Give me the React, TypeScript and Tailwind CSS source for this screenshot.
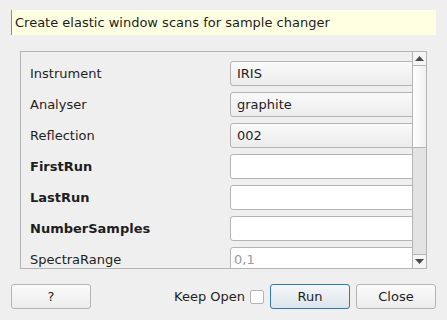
import React from "react";

const font = { fontFamily: '"DejaVu Sans", "Liberation Sans", sans-serif' };

function Combo({ value }: { value: string }) {
  return (
    <div className="h-[25px] w-[200px] shrink-0 rounded-[3px] border border-[#b4b4b4] bg-gradient-to-b from-[#fafafa] to-[#ececec] pl-[6px] flex items-center text-[13px] text-[#1e1e1e]">
      {value}
    </div>
  );
}

function Field({ placeholder }: { placeholder?: string }) {
  return (
    <div className="h-[25px] w-[200px] shrink-0 rounded-[3px] border border-[#b4b4b4] bg-white pl-[3px] flex items-center text-[13px] text-[#9a9a9a]">
      {placeholder ?? ""}
    </div>
  );
}

const rows: { label: string; bold?: boolean; kind: "combo" | "field"; value?: string }[] = [
  { label: "Instrument", kind: "combo", value: "IRIS" },
  { label: "Analyser", kind: "combo", value: "graphite" },
  { label: "Reflection", kind: "combo", value: "002" },
  { label: "FirstRun", bold: true, kind: "field" },
  { label: "LastRun", bold: true, kind: "field" },
  { label: "NumberSamples", bold: true, kind: "field" },
  { label: "SpectraRange", kind: "field", value: "0,1" },
];

export default function App() {
  return (
    <div className="w-[447px] h-[320px] bg-[#efefef] flex flex-col text-[13px] text-[#1e1e1e] overflow-hidden" style={font}>
      <div className="mt-[10px] mx-[11px] h-[25px] bg-[#ffffe1] border-l border-[#8c8c7a] pl-[3px] flex items-center">
        Create elastic window scans for sample changer
      </div>
      <div className="mt-[16px] mx-[20px] h-[218px] border border-[#b4b4b4] flex">
        <div className="flex-1 overflow-hidden pt-[9px] pl-[9px] flex flex-col gap-[6px]">
          {rows.map((r) => (
            <div key={r.label} className="flex items-center shrink-0">
              <div className={`w-[200px] shrink-0 ${r.bold ? "font-bold" : ""}`}>{r.label}</div>
              {r.kind === "combo" ? <Combo value={r.value!} /> : <Field placeholder={r.value} />}
            </div>
          ))}
        </div>
        <div className="w-[14px] shrink-0 border-l border-[#b4b4b4] flex flex-col">
          <div className="h-[14px] shrink-0 border-b border-[#b4b4b4] bg-[#f6f6f6] flex items-center justify-center">
            <svg width="9" height="5" viewBox="0 0 9 5"><path d="M4.5 0 L9 5 L0 5 Z" fill="#4a4a4a" /></svg>
          </div>
          <div className="h-[82px] shrink-0 border-b border-[#b4b4b4] bg-gradient-to-r from-[#ffffff] to-[#f0f0f0]" />
          <div className="flex-1 bg-[#e3e3e3]" />
          <div className="h-[14px] shrink-0 border-t border-[#b4b4b4] bg-[#f6f6f6] flex items-center justify-center">
            <svg width="9" height="5" viewBox="0 0 9 5"><path d="M0 0 L9 0 L4.5 5 Z" fill="#4a4a4a" /></svg>
          </div>
        </div>
      </div>
      <div className="mt-[15px] mx-[11px] flex items-center h-[25px]">
        <button className="w-[80px] h-[25px] rounded-[3px] border border-[#b4b4b4] bg-gradient-to-b from-[#fbfbfb] to-[#ececec] text-[13px]">?</button>
        <div className="flex-1" />
        <span>Keep Open</span>
        <div className="ml-[5px] w-[14px] h-[14px] border border-[#b4b4b4] bg-white rounded-[2px]" />
        <button className="ml-[6px] w-[80px] h-[25px] rounded-[3px] border border-[#3278b4] bg-gradient-to-b from-[#f4f7fa] to-[#dde4ea] text-[13px]">Run</button>
        <button className="ml-[6px] w-[80px] h-[25px] rounded-[3px] border border-[#b4b4b4] bg-gradient-to-b from-[#fbfbfb] to-[#ececec] text-[13px]">Close</button>
      </div>
    </div>
  );
}
